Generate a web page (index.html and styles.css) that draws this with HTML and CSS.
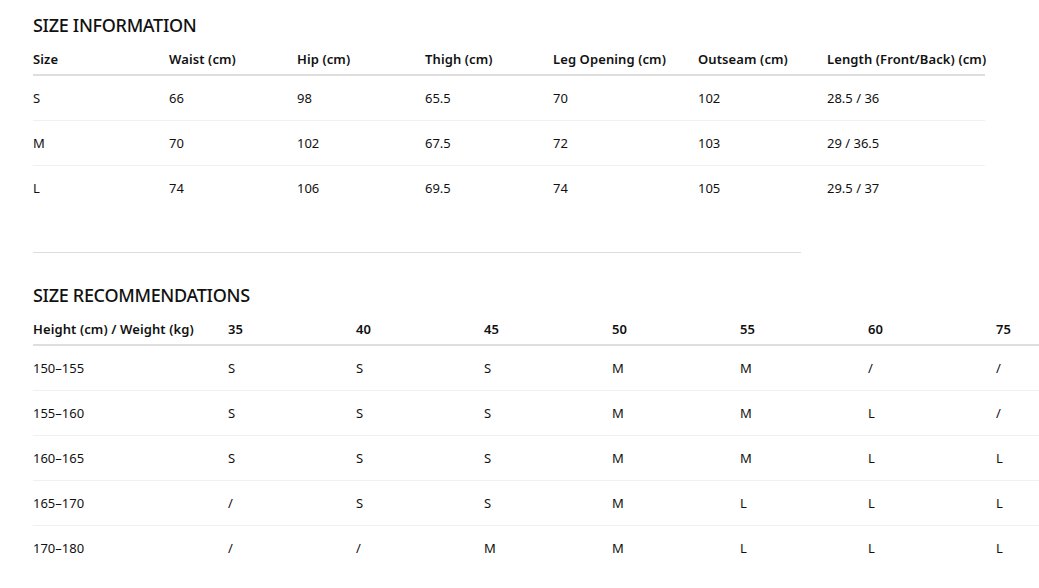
FILE: index.html
```html
<!DOCTYPE html>
<html lang="en">
<head>
<meta charset="utf-8">
<title>Size Guide</title>
<link rel="stylesheet" href="styles.css">
</head>
<body>
<div class="page">
  <section class="block">
    <h2 class="title">SIZE INFORMATION</h2>
    <table class="chart info">
      <colgroup>
        <col class="w136"><col class="w128"><col class="w128"><col class="w128"><col class="w145"><col class="w129"><col class="w158">
      </colgroup>
      <thead>
        <tr><th>Size</th><th>Waist (cm)</th><th>Hip (cm)</th><th>Thigh (cm)</th><th>Leg Opening (cm)</th><th>Outseam (cm)</th><th>Length (Front/Back) (cm)</th></tr>
      </thead>
      <tbody>
        <tr><td>S</td><td>66</td><td>98</td><td>65.5</td><td>70</td><td>102</td><td>28.5 / 36</td></tr>
        <tr><td>M</td><td>70</td><td>102</td><td>67.5</td><td>72</td><td>103</td><td>29 / 36.5</td></tr>
        <tr><td>L</td><td>74</td><td>106</td><td>69.5</td><td>74</td><td>105</td><td>29.5 / 37</td></tr>
      </tbody>
    </table>
  </section>
  <hr class="divider">
  <section class="block">
    <h2 class="title">SIZE RECOMMENDATIONS</h2>
    <table class="chart rec">
      <colgroup>
        <col class="w195"><col class="w128"><col class="w128"><col class="w128"><col class="w128"><col class="w128"><col class="w128"><col class="w128">
      </colgroup>
      <thead>
        <tr><th>Height (cm) / Weight (kg)</th><th>35</th><th>40</th><th>45</th><th>50</th><th>55</th><th>60</th><th>75</th></tr>
      </thead>
      <tbody>
        <tr><td>150–155</td><td>S</td><td>S</td><td>S</td><td>M</td><td>M</td><td>/</td><td>/</td></tr>
        <tr><td>155–160</td><td>S</td><td>S</td><td>S</td><td>M</td><td>M</td><td>L</td><td>/</td></tr>
        <tr><td>160–165</td><td>S</td><td>S</td><td>S</td><td>M</td><td>M</td><td>L</td><td>L</td></tr>
        <tr><td>165–170</td><td>/</td><td>S</td><td>S</td><td>M</td><td>L</td><td>L</td><td>L</td></tr>
        <tr><td>170–180</td><td>/</td><td>/</td><td>M</td><td>M</td><td>L</td><td>L</td><td>L</td></tr>
      </tbody>
    </table>
  </section>
</div>
</body>
</html>
```
FILE: styles.css
```css
html, body {
  margin: 0;
  padding: 0;
  background: #ffffff;
}
body {
  font-family: "Noto Sans", "Open Sans", sans-serif;
  color: #111111;
  overflow: hidden;
}
.page {
  padding: 13px 0 0 33px;
}
.title {
  margin: 0 0 6px 0;
  font-size: 18px;
  line-height: 24px;
  font-weight: 500;
  letter-spacing: -0.3px;
  color: #111111;
}
.chart {
  border-collapse: collapse;
  table-layout: fixed;
  font-size: 13px;
}
.chart.info { width: 952px; }
.chart.rec { width: 1091px; }
.w136 { width: 136px; }
.w128 { width: 128px; }
.w129 { width: 129px; }
.w145 { width: 145px; }
.w158 { width: 158px; }
.w195 { width: 195px; }
.chart th {
  text-align: left;
  font-weight: 600;
  height: 31px;
  padding: 0;
  vertical-align: middle;
  border-bottom: 2px solid #dedede;
  white-space: nowrap;
  letter-spacing: 0.1px;
}
.chart td {
  height: 44px;
  padding: 0;
  vertical-align: middle;
  border-bottom: 1px solid #f0f0f0;
  white-space: nowrap;
}
.chart tbody tr:last-child td {
  border-bottom: none;
}
.divider {
  width: 768px;
  margin: 42px 0 30px 0;
  border: none;
  border-top: 1px solid #dddddd;
  height: 0;
}
```
